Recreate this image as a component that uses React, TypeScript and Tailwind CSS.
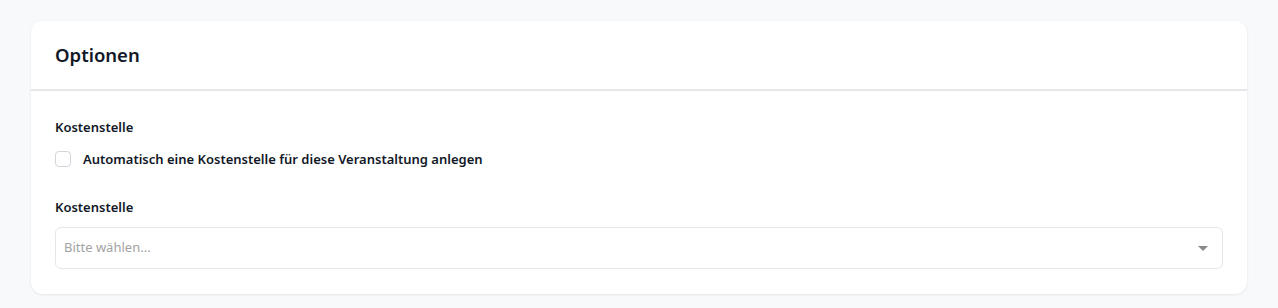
const App = () => {
  return (
    <div className="min-h-[308px] bg-[#f8f9fb] px-[31px] pt-[21px] pb-[14px] font-['Noto_Sans',sans-serif]">
      <div className="rounded-xl bg-white shadow-[0_1px_3px_rgba(0,0,0,0.08)]">
        {/* Header */}
        <div className="flex h-[70px] items-center border-b-2 border-[#e5e7eb] px-6">
          <h2 className="text-[18.5px] font-semibold text-[#111827]">Optionen</h2>
        </div>

        {/* Body */}
        <div className="px-6 pt-[26px] pb-[25px]">
          <div className="text-[13px] leading-5 font-semibold text-[#111827]">Kostenstelle</div>
          <label className="mt-3 flex items-center gap-3">
            <span className="h-4 w-4 rounded border border-[#d1d5db] bg-white" />
            <span className="text-[13px] leading-5 font-semibold text-[#111827]">
              Automatisch eine Kostenstelle für diese Veranstaltung anlegen
            </span>
          </label>

          <div className="mt-7 text-[13px] leading-5 font-semibold text-[#111827]">Kostenstelle</div>
          <div className="mt-[10px] flex h-[42px] items-center justify-between rounded-md border border-[#e5e7eb] pl-2">
            <span className="text-[13px] text-[#a3a3a3]">Bitte wählen...</span>
            <svg width="10" height="5" viewBox="0 0 10 5" className="mr-[14px]">
              <path d="M0 0h10L5 5z" fill="#8a8a8a" />
            </svg>
          </div>
        </div>
      </div>
    </div>
  );
};

export default App;
